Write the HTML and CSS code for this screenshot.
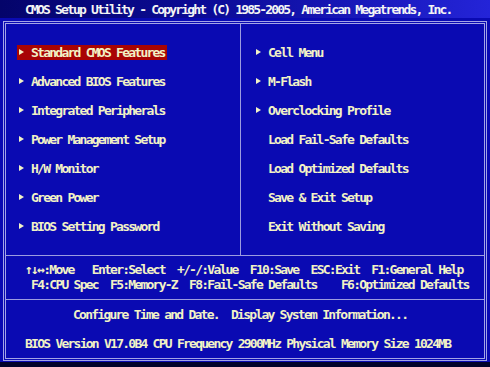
FILE: index.html
```html
<!DOCTYPE html>
<html>
<head>
<meta charset="utf-8">
<link rel="stylesheet" href="styles.css">
</head>
<body>
<div class="screen">
  <div class="header">CMOS Setup Utility - Copyright (C) 1985-2005, American Megatrends, Inc.</div>
  <div class="frame">
    <div class="menu">
      <ul class="col col-left">
        <li class="item selected"><span class="arrow"></span><span>Standard CMOS Features</span></li>
        <li class="item"><span class="arrow"></span><span>Advanced BIOS Features</span></li>
        <li class="item"><span class="arrow"></span><span>Integrated Peripherals</span></li>
        <li class="item"><span class="arrow"></span><span>Power Management Setup</span></li>
        <li class="item"><span class="arrow"></span><span>H/W Monitor</span></li>
        <li class="item"><span class="arrow"></span><span>Green Power</span></li>
        <li class="item"><span class="arrow"></span><span>BIOS Setting Password</span></li>
      </ul>
      <ul class="col col-right">
        <li class="item"><span class="arrow"></span><span>Cell Menu</span></li>
        <li class="item"><span class="arrow"></span><span>M-Flash</span></li>
        <li class="item"><span class="arrow"></span><span>Overclocking Profile</span></li>
        <li class="item"><span class="noarrow"></span><span>Load Fail-Safe Defaults</span></li>
        <li class="item"><span class="noarrow"></span><span>Load Optimized Defaults</span></li>
        <li class="item"><span class="noarrow"></span><span>Save &amp; Exit Setup</span></li>
        <li class="item"><span class="noarrow"></span><span>Exit Without Saving</span></li>
      </ul>
    </div>
    <div class="help">
      <div class="help-line">↑↓↔:Move   Enter:Select  +/-/:Value  F10:Save  ESC:Exit  F1:General Help</div>
      <div class="help-line"> F4:CPU Spec  F5:Memory-Z  F8:Fail-Safe Defaults    F6:Optimized Defaults</div>
    </div>
    <div class="status">
      <div class="status-desc">Configure Time and Date.  Display System Information...</div>
      <div class="status-info">BIOS Version V17.0B4 CPU Frequency 2900MHz Physical Memory Size 1024MB</div>
    </div>
  </div>
  <div class="bottom-strip"></div>
</div>
</body>
</html>
```

FILE: styles.css
```css
html, body {
  margin: 0;
  padding: 0;
}
body {
  width: 490px;
  height: 367px;
  overflow: hidden;
  background: #0a0ab2;
}
.screen {
  display: flex;
  flex-direction: column;
  width: 490px;
  height: 367px;
  font-family: "DejaVu Sans Mono", "Liberation Mono", monospace;
  font-weight: bold;
  font-size: 13px;
  letter-spacing: -1.75px;
  color: #f2f2c6;
}
.header {
  height: 18px;
  line-height: 20px;
  padding-left: 25px;
  color: #f4f4f4;
  letter-spacing: -1.82px;
  white-space: pre;
  background: linear-gradient(90deg, #04046a 0%, #0c0c9a 45%, #2424d8 100%);
}
.frame {
  margin: 3px 3px 0 3px;
  height: 334px;
  border: 3px double #a4a4e6;
  display: flex;
  flex-direction: column;
}
.menu {
  display: grid;
  grid-template-columns: 235px 1fr;
  height: 231px;
  border-bottom: 1px solid #9c9ce0;
}
.col {
  list-style: none;
  margin: 0;
  padding: 21px 0 0 0;
}
.col-left {
  border-right: 1px solid #9c9ce0;
  padding-left: 11px;
}
.col-right {
  padding-left: 13px;
}
.item {
  height: 29px;
  display: flex;
  align-items: flex-start;
}
.item > span:last-child {
  line-height: 15px;
  height: 15px;
}
.item .arrow,
.item .noarrow {
  width: 12px;
  height: 15px;
  flex: none;
  position: relative;
  margin-left: 2px;
}
.item .arrow::before {
  content: "";
  position: absolute;
  left: 0;
  top: 4px;
  border-left: 5px solid #f2f2c6;
  border-top: 3.5px solid transparent;
  border-bottom: 3.5px solid transparent;
}
.item.selected > span:last-child,
.item.selected .arrow {
  background: #a80404;
}
.item.selected .arrow {
  margin-left: 0;
  padding-left: 2px;
}
.item.selected .arrow::before {
  left: 2px;
}
.item.selected > span:last-child {
  padding-right: 2px;
}
.help {
  border-bottom: 1px solid #9c9ce0;
  padding-top: 6px;
  box-sizing: border-box;
  height: 44px;
}
.help-line {
  line-height: 15px;
  padding-left: 19px;
  white-space: pre;
}
.status {
  flex: 1;
  display: flex;
  flex-direction: column;
}
.status-desc {
  line-height: 15px;
  padding-top: 7px;
  padding-left: 67px;
  white-space: pre;
}
.status-info {
  line-height: 15px;
  padding-top: 14px;
  padding-left: 19px;
  white-space: pre;
}
.bottom-strip {
  flex: 1;
  background: #02022a;
  margin-top: 1px;
}
```
